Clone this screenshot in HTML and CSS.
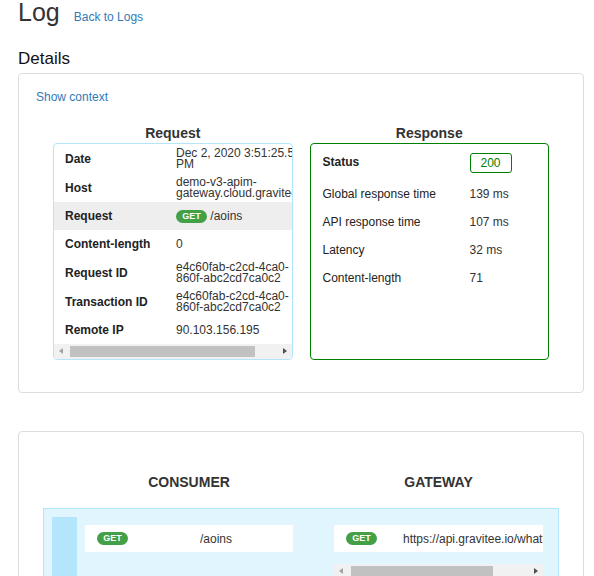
FILE: index.html
```html
<!DOCTYPE html>
<html>
<head>
<meta charset="utf-8">
<link rel="stylesheet" href="styles.css">
</head>
<body>
<div class="page">
  <div class="title-row">
    <h1 class="title">Log</h1>
    <a class="link back">Back to Logs</a>
  </div>
  <h2 class="section">Details</h2>
  <div class="card card-details">
    <a class="link ctx">Show context</a>
    <div class="cols">
      <div class="col">
        <div class="col-title">Request</div>
        <div class="req-box">
          <div class="req-clip">
            <table class="req-table">
              <colgroup><col class="c-lbl"><col class="c-val"></colgroup>
              <tr class="two"><td class="lbl">Date</td><td class="val">Dec 2, 2020 3:51:25.500 PM</td></tr>
              <tr class="two"><td class="lbl">Host</td><td class="val">demo-v3-apim-gateway.cloud.gravitee.io</td></tr>
              <tr class="hl"><td class="lbl">Request</td><td class="val"><span class="get">GET</span> /aoins</td></tr>
              <tr><td class="lbl">Content-length</td><td class="val">0</td></tr>
              <tr class="two"><td class="lbl">Request ID</td><td class="val">e4c60fab-c2cd-4ca0-860f-abc2cd7ca0c2</td></tr>
              <tr class="two"><td class="lbl">Transaction ID</td><td class="val">e4c60fab-c2cd-4ca0-860f-abc2cd7ca0c2</td></tr>
              <tr><td class="lbl">Remote IP</td><td class="val">90.103.156.195</td></tr>
            </table>
          </div>
          <div class="hscroll">
            <span class="arr arr-left"></span>
            <div class="track"><div class="thumb thumb-req"></div></div>
            <span class="arr arr-right"></span>
          </div>
        </div>
      </div>
      <div class="col">
        <div class="col-title">Response</div>
        <div class="res-box">
          <table class="res-table">
            <tr class="status"><td class="rlbl strong">Status</td><td class="rval"><span class="code">200</span></td></tr>
            <tr><td class="rlbl">Global response time</td><td class="rval">139 ms</td></tr>
            <tr><td class="rlbl">API response time</td><td class="rval">107 ms</td></tr>
            <tr><td class="rlbl">Latency</td><td class="rval">32 ms</td></tr>
            <tr><td class="rlbl">Content-length</td><td class="rval">71</td></tr>
          </table>
        </div>
      </div>
    </div>
  </div>

  <div class="card card-flow">
    <div class="flow-head">
      <div class="flow-title">CONSUMER</div>
      <div class="flow-title">GATEWAY</div>
    </div>
    <div class="flow">
      <div class="strip"></div>
      <div class="flow-cols">
        <div class="flow-col">
          <div class="call">
            <span class="get">GET</span>
            <span class="path">/aoins</span>
          </div>
        </div>
        <div class="flow-col">
          <div class="scroller">
            <div class="call wide">
              <span class="get">GET</span>
              <span class="url">https://api.gravitee.io/whattimeisit</span>
            </div>
          </div>
          <div class="hscroll hscroll-gw">
            <span class="arr arr-left"></span>
            <div class="track"><div class="thumb thumb-gw"></div></div>
            <span class="arr arr-right"></span>
          </div>
        </div>
      </div>
    </div>
  </div>
</div>
</body>
</html>
```
FILE: styles.css
```css
html, body {
  margin: 0;
  padding: 0;
  background: #fff;
}
body {
  font-family: "Liberation Sans", Arial, sans-serif;
  color: #333;
  font-size: 12px;
}
.page {
  padding: 0 10px 0 18px;
}
.title-row {
  display: flex;
  align-items: baseline;
  gap: 14px;
}
.title {
  margin: 0;
  font-size: 25px;
  line-height: 24px;
  font-weight: normal;
  color: #333;
}
.link {
  color: #337ab7;
  text-decoration: none;
  font-size: 12px;
}
.section {
  margin: 25px 0 4px;
  font-size: 17px;
  line-height: 20px;
  font-weight: normal;
  color: #111;
}
.card {
  border: 1px solid #ddd;
  border-radius: 4px;
  background: #fff;
}
.card-details {
  padding: 16px 17px 32px;
}
.ctx {
  display: block;
  line-height: 14px;
}
.cols {
  display: flex;
  gap: 17px;
  padding: 0 17px;
  margin-top: 21px;
}
.col {
  flex: 1;
  min-width: 0;
  display: flex;
  flex-direction: column;
}
.col-title {
  text-align: center;
  font-weight: bold;
  font-size: 14px;
  line-height: 16px;
  margin-bottom: 2px;
}
.req-box {
  border: 1px solid #b3e5fc;
  border-radius: 4px;
  overflow: hidden;
}
.req-clip {
  overflow: hidden;
}
.req-table {
  border-collapse: collapse;
  table-layout: fixed;
  width: 277px;
}
.c-lbl {
  width: 122px;
}
.c-val {
  width: 155px;
}
.req-table td {
  vertical-align: middle;
}
.req-table .lbl {
  padding: 4px 0 4px 11px;
  line-height: 20px;
  font-weight: bold;
  color: #222;
  white-space: nowrap;
}
.req-table .val {
  padding: 4px 20px 4px 0;
  line-height: 10.5px;
  color: #333;
}
.req-table tr:not(.two) .val {
  line-height: 20px;
  white-space: nowrap;
}
.req-table tr.hl td {
  background: #eee;
}
.hscroll {
  display: flex;
  align-items: center;
  height: 15px;
  background: #f1f1f1;
}
.arr {
  width: 15px;
  height: 15px;
  flex: none;
  position: relative;
}
.arr::after {
  content: "";
  position: absolute;
  top: 4px;
  border-top: 3.5px solid transparent;
  border-bottom: 3.5px solid transparent;
}
.arr-left::after {
  left: 5px;
  border-right: 4px solid #a3a3a3;
}
.arr-right::after {
  left: 6px;
  border-left: 4px solid #505050;
}
.track {
  flex: 1;
  height: 15px;
  display: flex;
  align-items: center;
}
.thumb {
  height: 11px;
  background: #c1c1c1;
}
.thumb-req {
  margin-left: 1px;
  width: 185px;
}
.thumb-gw {
  margin-left: 2px;
  width: 142px;
}
.res-box {
  flex: 1;
  border: 1px solid #008000;
  border-radius: 4px;
  padding-top: 1px;
}
.res-table {
  border-collapse: collapse;
  width: 100%;
}
.res-table td {
  padding: 4px 0;
  line-height: 20px;
  vertical-align: middle;
}
.res-table tr.status td {
  padding-top: 7px;
  padding-bottom: 7px;
}
.res-table td.rlbl {
  width: 147px;
  padding-left: 12px;
  color: #222;
}
.res-table .strong {
  font-weight: bold;
}
.code {
  display: inline-block;
  box-sizing: border-box;
  width: 42px;
  height: 20px;
  line-height: 18px;
  border: 1px solid #008000;
  border-radius: 3px;
  color: #008000;
  text-align: center;
  vertical-align: middle;
}
.get {
  display: inline-block;
  background: #43a047;
  color: #fff;
  font-weight: bold;
  font-size: 9px;
  line-height: 13px;
  width: 31px;
  text-align: center;
  border-radius: 7px;
  vertical-align: middle;
}
.card-flow {
  margin-top: 38px;
  padding: 42px 24px 40px;
}
.flow-head {
  display: grid;
  grid-template-columns: 208px 209px;
  column-gap: 41px;
  padding-left: 42px;
  margin-bottom: 18px;
}
.flow-title {
  text-align: center;
  font-weight: bold;
  font-size: 14px;
  line-height: 16px;
  color: #333;
}
.flow {
  display: flex;
  background: #e1f5fe;
  border: 1px solid #b3e5fc;
  padding: 8px 15px 20px 8px;
}
.strip {
  width: 25px;
  min-height: 80px;
  background: #b3e5fc;
  margin-right: 8px;
}
.flow-cols {
  display: grid;
  grid-template-columns: 208px 209px;
  column-gap: 41px;
  padding-top: 8px;
}
.flow-col {
  min-width: 0;
}
.call {
  display: flex;
  align-items: center;
  height: 27px;
  background: #fff;
  padding-left: 12px;
  white-space: nowrap;
}
.path {
  margin-left: 72px;
}
.scroller {
  overflow: hidden;
}
.call.wide {
  width: 272px;
  box-sizing: border-box;
}
.url {
  margin-left: 26px;
  color: #333;
}
.hscroll-gw {
  margin-top: 12px;
}
```
